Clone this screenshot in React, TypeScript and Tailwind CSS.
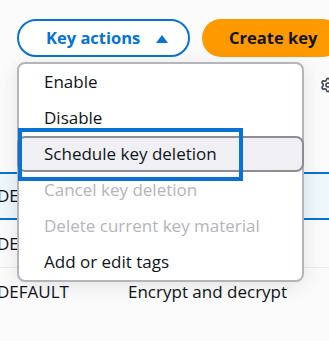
import React from "react";
import { Settings } from "lucide-react";

const items: { label: string; disabled?: boolean; highlighted?: boolean }[] = [
  { label: "Enable" },
  { label: "Disable" },
  { label: "Schedule key deletion", highlighted: true },
  { label: "Cancel key deletion", disabled: true },
  { label: "Delete current key material", disabled: true },
  { label: "Add or edit tags" },
];

export default function App() {
  return (
    <div
      className="relative w-[329px] h-[341px] overflow-hidden bg-[#fbfbfb] text-[#0f141a]"
      style={{ fontFamily: '"Open Sans", "Noto Sans", sans-serif' }}
    >
      {/* top action bar */}
      <div className="flex items-center gap-[12px] pl-[17px] pt-[19px] whitespace-nowrap">
        <button className="flex shrink-0 items-center h-[38px] w-[173px] pl-[27px] gap-[16px] rounded-full border-2 border-[#0972d3] bg-white text-[#0972d3] text-[16.5px] font-bold">
          <span>Key actions</span>
          <svg width="12" height="8" viewBox="0 0 12 8" className="mt-[1px]">
            <polygon points="6,0 12,8 0,8" fill="#0972d3" />
          </svg>
        </button>
        <button className="flex items-center h-[38px] pl-[27px] pr-[24px] rounded-full bg-[#ff9900] text-[#0f141a] text-[16.5px] font-bold shrink-0">
          Create key
        </button>
      </div>

      {/* table header preference row */}
      <div className="flex justify-end h-[115px] pt-[20px]">
        <div className="-mr-[7px] text-[#424650]">
          <Settings size={16} strokeWidth={2.4} />
        </div>
      </div>

      {/* table rows */}
      <div className="flex flex-col text-[17px]">
        <div className="flex items-center h-[48px] border-y-2 border-[#0972d3] bg-[#eef7fc] -ml-[3px]">
          <span>DEFAULT</span>
        </div>
        <div className="flex items-center h-[48px] border-b border-[#e9ebed] -ml-[3px]">
          <span>DEFAULT</span>
        </div>
        <div className="flex items-center h-[48px] -ml-[3px]">
          <span className="w-[131px]">DEFAULT</span>
          <span>Encrypt and decrypt</span>
        </div>
      </div>

      {/* dropdown menu */}
      <div className="absolute left-[17px] top-[62px] w-[287px] rounded-lg border-2 border-[#b4b4bb] bg-white shadow-[0_4px_20px_rgba(0,7,22,0.10)]">
        <ul className="flex flex-col">
          {items.map((it) => (
            <li
              key={it.label}
              className={
                it.highlighted
                  ? "flex items-center h-[36px] -mx-[2px] pl-[25px] rounded-lg border-2 border-[#8c8c94] bg-[#f0f0f4] text-[17px] text-[#0f141a]"
                  : it.disabled
                  ? "flex items-center h-[36px] pl-[25px] text-[17px] text-[#b4b4bb]"
                  : "flex items-center h-[36px] pl-[25px] text-[17px] text-[#0f141a]"
              }
            >
              {it.label}
            </li>
          ))}
        </ul>
        {/* focus annotation rectangle */}
        <div className="absolute left-[-1px] top-[64px] w-[225px] h-[53px] border-[4px] border-[#0972d3] pointer-events-none" />
      </div>
    </div>
  );
}
